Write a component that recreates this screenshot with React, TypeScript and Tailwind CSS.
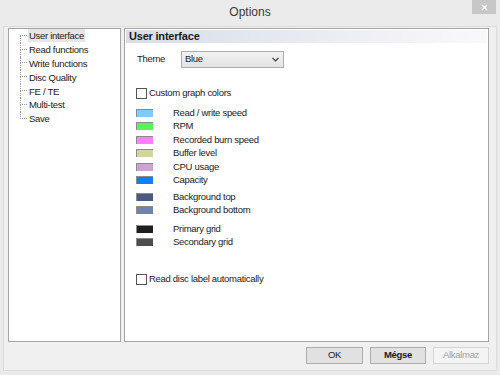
import React from "react";

const TREE_ITEMS = [
  "User interface",
  "Read functions",
  "Write functions",
  "Disc Quality",
  "FE / TE",
  "Multi-test",
  "Save",
];

const COLOR_GROUPS = [
  [
    { label: "Read / write speed", color: "bg-[#82caff]" },
    { label: "RPM", color: "bg-[#55f555]" },
    { label: "Recorded burn speed", color: "bg-[#ff80ff]" },
    { label: "Buffer level", color: "bg-[#d3d3a3]" },
    { label: "CPU usage", color: "bg-[#d0a2d2]" },
    { label: "Capacity", color: "bg-[#0a80ff]" },
  ],
  [
    { label: "Background top", color: "bg-[#4b5a82]" },
    { label: "Background bottom", color: "bg-[#7283a9]" },
  ],
  [
    { label: "Primary grid", color: "bg-[#1e1e1e]" },
    { label: "Secondary grid", color: "bg-[#4e4e4e]" },
  ],
];

const Checkbox: React.FC<{ label: string }> = ({ label }) => (
  <div className="flex items-center h-[11px] gap-[2px]">
    <div className="w-[11px] h-[11px] border border-[#555] bg-white" />
    <span>{label}</span>
  </div>
);

const TreeRow: React.FC<{ label: string; first: boolean; last: boolean; selected: boolean }> = ({
  label,
  first,
  last,
  selected,
}) => (
  <div className="flex h-[13.8px]">
    <div className="w-[7px] flex flex-col">
      <div
        className={`h-1/2 border-b border-dotted border-[#999] ${first ? "" : "border-l"}`}
      />
      <div className={`h-1/2 border-dotted border-[#999] ${last ? "" : "border-l"}`} />
    </div>
    <div className="flex items-center ml-[1px]">
      <span className={`px-[1px] leading-[13px] ${selected ? "bg-[#e6e6e6]" : ""}`}>{label}</span>
    </div>
  </div>
);

export default function App() {
  return (
    <div
      className="w-[500px] h-[375px] bg-[#ebebeb] flex flex-col px-[3px] pb-[4px] text-[9.5px] tracking-[-0.3px] text-[#1b1b1b]"
      style={{ fontFamily: '"Liberation Sans", Arial, sans-serif' }}
    >
      {/* Title bar */}
      <div className="h-[26px] shrink-0 grid grid-cols-[1fr_auto_1fr] items-start">
        <div />
        <div className="text-[12px] tracking-normal text-[#3a3a3a] pt-[3px]">Options</div>
        <div className="flex justify-end pr-[1px]">
          <div className="w-[24px] h-[14px] bg-[#c7c7c7] flex items-center justify-center">
            <svg width="7" height="7" viewBox="0 0 7 7">
              <path d="M1 1 L6 6 M6 1 L1 6" stroke="#fff" strokeWidth="1.4" />
            </svg>
          </div>
        </div>
      </div>

      {/* Client area */}
      <div className="flex-1 bg-[#f0f0f0] border border-[#dcdcdc] pl-[4px] pr-[7px] pt-[1px] flex flex-col">
        <div className="flex gap-[3px] h-[314px] shrink-0">
          {/* Tree */}
          <div className="w-[113px] bg-white border border-[#a5a5a5] pl-[11px]">
            {TREE_ITEMS.map((item, i) => (
              <TreeRow
                key={item}
                label={item}
                first={i === 0}
                last={i === TREE_ITEMS.length - 1}
                selected={i === 0}
              />
            ))}
          </div>

          {/* Page */}
          <div className="flex-1 bg-white border border-[#a5a5a5] p-[1px] flex flex-col">
            <div className="h-[13px] bg-gradient-to-r from-[#d8dee7] to-[#f8f9fb] flex items-center pl-[3px]">
              <span className="text-[11px] font-bold tracking-[-0.2px] text-[#1a1a1a]">
                User interface
              </span>
            </div>

            <div className="pl-[10px] flex flex-col">
              <div className="flex items-center h-[17px] mt-[8px]">
                <span className="w-[45px] pl-[1px]">Theme</span>
                <div className="w-[103px] h-[17px] border border-[#acacac] bg-gradient-to-b from-[#f2f2f2] to-[#e3e3e3] flex items-center justify-between pl-[3px] pr-[4px]">
                  <span>Blue</span>
                  <svg width="7" height="5" viewBox="0 0 7 5">
                    <path d="M0.5 0.8 L3.5 3.8 L6.5 0.8" stroke="#333" strokeWidth="1.2" fill="none" />
                  </svg>
                </div>
              </div>

              <div className="mt-[20px]">
                <Checkbox label="Custom graph colors" />
              </div>

              <div className="mt-[7px] flex flex-col">
                {COLOR_GROUPS.map((group, gi) => (
                  <div key={gi} className={`flex flex-col ${gi === 1 ? "mt-[3px]" : ""} ${gi === 2 ? "mt-[5px]" : ""}`}>
                    {group.map((row) => (
                      <div key={row.label} className="flex items-center h-[13.5px] gap-[20px]">
                        <div
                          className={`w-[17px] h-[8px] border-t border-l border-[#8c8c8c] ${row.color}`}
                        />
                        <span>{row.label}</span>
                      </div>
                    ))}
                  </div>
                ))}
              </div>

              <div className="mt-[25px]">
                <Checkbox label="Read disc label automatically" />
              </div>
            </div>
          </div>
        </div>

        {/* Buttons */}
        <div className="flex justify-end gap-[7px] mt-[5px]">
          <button className="w-[57px] h-[17px] border border-[#adadad] bg-[#e1e1e1] text-[#1b1b1b]">
            OK
          </button>
          <button className="w-[56px] h-[17px] border border-[#adadad] bg-[#e1e1e1] font-bold text-[#1b1b1b]">
            Mégse
          </button>
          <button className="w-[56px] h-[17px] border border-[#d5d5d5] bg-[#f4f4f4] text-[#a3a3a3]">
            Alkalmaz
          </button>
        </div>
      </div>
    </div>
  );
}
